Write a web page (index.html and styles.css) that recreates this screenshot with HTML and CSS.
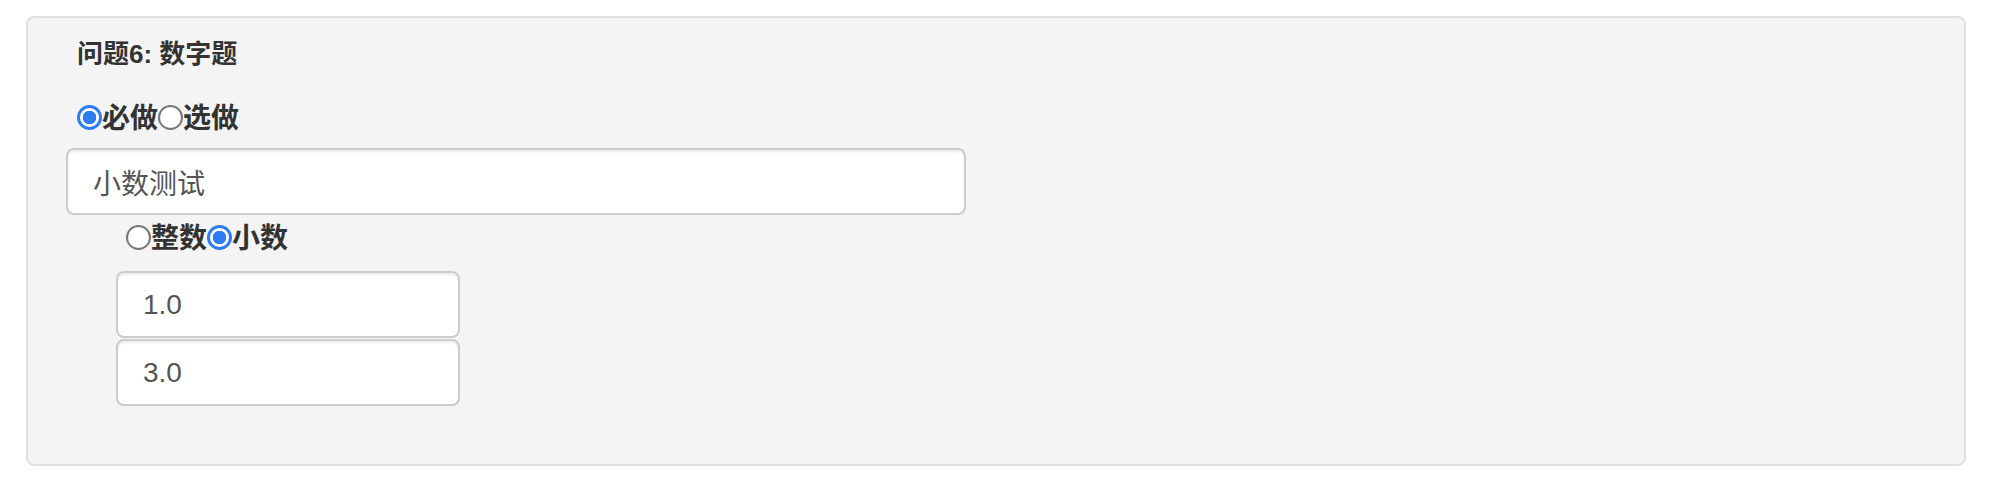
FILE: index.html
```html
<!DOCTYPE html>
<html lang="zh-CN">
<head>
<meta charset="utf-8">
<title>问题6</title>
<link rel="stylesheet" href="styles.css">
</head>
<body>
<div class="panel">
  <div class="title">问题6: 数字题</div>
  <div class="radios">
    <label class="opt"><input type="radio" name="req" checked>必做</label>
    <label class="opt"><input type="radio" name="req">选做</label>
  </div>
  <input class="field wide" type="text" value="小数测试">
  <div class="radios sub">
    <label class="opt"><input type="radio" name="kind">整数</label>
    <label class="opt"><input type="radio" name="kind" checked>小数</label>
  </div>
  <div class="nums">
    <input class="field num" type="text" value="1.0">
    <input class="field num" type="text" value="3.0">
  </div>
</div>
</body>
</html>
```

FILE: styles.css
```css
html, body {
  margin: 0;
  padding: 0;
  background: #fff;
}
body {
  padding: 16px 32px 0 26px;
  font-family: "Liberation Sans", "Noto Sans CJK SC", sans-serif;
  color: #333;
}
.panel {
  background: #f4f4f4;
  border: 2px solid #e0e0e0;
  border-radius: 8px;
  padding: 18px 38px 59px 38px;
  height: 450px;
  box-sizing: border-box;
}
.title {
  font-size: 26px;
  font-weight: bold;
  line-height: 36px;
  margin-left: 11px;
}
.radios {
  display: flex;
  align-items: center;
  height: 40px;
  margin: 27px 0 9px 11px;
}
.radios.sub {
  margin: 4px 0 12px 60px;
}
.opt {
  display: flex;
  align-items: center;
  font-size: 28px;
  font-weight: bold;
  line-height: 40px;
  color: #333;
}
.opt input {
  appearance: none;
  -webkit-appearance: none;
  width: 25px;
  height: 25px;
  margin: -4px 0 0 0;
  border: 2px solid #777;
  border-radius: 50%;
  background: #fff;
  box-sizing: border-box;
}
.opt input:checked {
  border: 3px solid #2f7cf6;
  background: radial-gradient(circle, #2f7cf6 0 6.5px, #fff 7px);
}
.field {
  display: block;
  box-sizing: border-box;
  height: 67px;
  border: 2px solid #ccc;
  border-radius: 8px;
  background: #fff;
  box-shadow: inset 0 2px 2px rgba(0, 0, 0, 0.075);
  padding: 0 25px;
  font-family: "Liberation Sans", "Noto Sans CJK SC", sans-serif;
  font-size: 28px;
  color: #555;
  margin: 0;
}
.wide {
  width: 900px;
}
.nums {
  display: flex;
  flex-direction: column;
  gap: 1px;
  margin-left: 50px;
}
.num {
  width: 344px;
}
```
